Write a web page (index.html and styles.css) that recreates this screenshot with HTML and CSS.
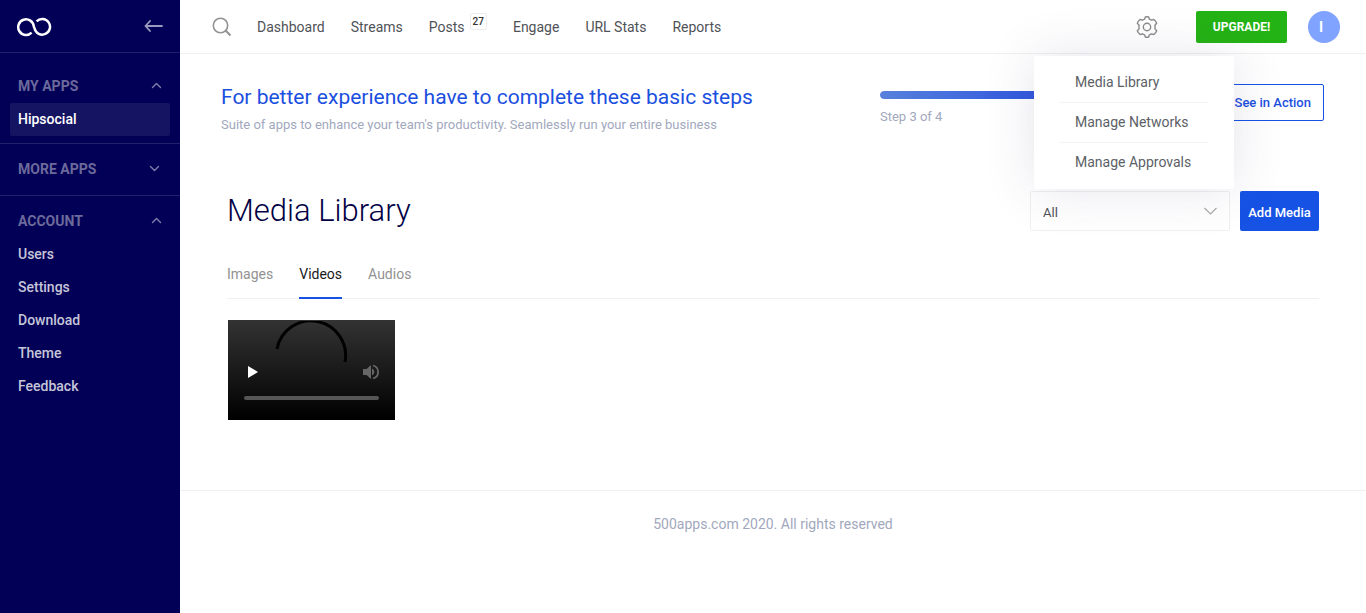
FILE: index.html
```html
<!DOCTYPE html>
<html lang="en">
<head>
<meta charset="utf-8">
<title>Hipsocial - Media Library</title>
<link rel="stylesheet" href="styles.css">
</head>
<body>
<div class="shell">
  <aside class="sidebar">
    <div class="brand">
      <a href="#" class="logo" aria-label="500apps home">
        <svg width="36" height="20" viewBox="0 0 36 20" fill="none" stroke="#fff" stroke-width="2.5">
          <path d="M15.600 15.600A7.800 7.800 0 1 1 17.800 9.500L18.600 11.500A7.800 7.800 0 1 0 20.600 4.400"/>
        </svg>
      </a>
      <button class="icon-button" aria-label="Collapse sidebar">
        <svg width="20" height="14" viewBox="0 0 20 14" fill="none" stroke="#9a9abf" stroke-width="1.8" stroke-linecap="round" stroke-linejoin="round"><path d="M19 6H2.500M7 1L2.500 6L7 11"/></svg>
      </button>
    </div>
    <section class="group group-first">
      <button class="group-head">MY APPS
        <svg class="chevron" width="11" height="7" viewBox="0 0 11 7"><path d="M1.500 5.500L5.500 1.500L9.500 5.500"/></svg>
      </button>
      <a href="#" class="side-link active">Hipsocial</a>
    </section>
    <section class="group group-closed">
      <button class="group-head">MORE APPS
        <svg class="chevron down" width="11" height="7" viewBox="0 0 11 7"><path d="M1.500 1.500L5.500 5.500L9.500 1.500"/></svg>
      </button>
    </section>
    <section class="group">
      <button class="group-head">ACCOUNT
        <svg class="chevron" width="11" height="7" viewBox="0 0 11 7"><path d="M1.500 5.500L5.500 1.500L9.500 5.500"/></svg>
      </button>
      <a href="#" class="side-link">Users</a>
      <a href="#" class="side-link">Settings</a>
      <a href="#" class="side-link">Download</a>
      <a href="#" class="side-link">Theme</a>
      <a href="#" class="side-link">Feedback</a>
    </section>
  </aside>

  <div class="page">
    <header class="topbar">
      <button class="icon-button search" aria-label="Search">
        <svg width="20" height="20" viewBox="0 0 20 20" fill="none" stroke="#929292" stroke-width="1.6"><circle cx="8.500" cy="8.500" r="7.200"/><path d="M13.300 13.300L18.500 18.500" stroke-width="2"/></svg>
      </button>
      <nav class="nav">
        <a href="#">Dashboard</a>
        <a href="#">Streams</a>
        <a href="#" class="with-badge">Posts<span class="badge">27</span></a>
        <a href="#">Engage</a>
        <a href="#">URL Stats</a>
        <a href="#">Reports</a>
      </nav>
      <div class="settings">
        <button class="icon-button" aria-label="Settings">
          <svg width="22" height="22" viewBox="0 0 22 22" fill="none" stroke="#8c8c8c" stroke-width="1.4" stroke-linejoin="round">
            <path d="M9.300 1Q11 .5 12.700 1L13.400 3.200Q14.600 3.600 15.500 4.200L17.900 3.500Q19.800 5 20.700 7.300L18.900 9.200Q19.200 11 18.900 12.800L20.700 14.700Q19.800 17 17.900 18.500L15.500 17.800Q14.600 18.400 13.400 18.800L12.700 21Q11 21.500 9.300 21L8.600 18.800Q7.400 18.400 6.500 17.800L4.100 18.500Q2.200 17 1.300 14.700L3.100 12.800Q2.800 11 3.100 9.200L1.300 7.300Q2.200 5 4.100 3.500L6.500 4.200Q7.400 3.600 8.600 3.200Z"/>
            <circle cx="11" cy="11" r="3.700"/>
          </svg>
        </button>
        <div class="menu">
          <a href="#">Media Library</a>
          <a href="#">Manage Networks</a>
          <a href="#">Manage Approvals</a>
        </div>
      </div>
      <button class="upgrade">UPGRADE!</button>
      <button class="avatar" aria-label="Account"><span>I</span></button>
    </header>

    <main>
      <section class="banner">
        <div class="intro">
          <h2>For better experience have to complete these basic steps</h2>
          <p>Suite of apps to enhance your team's productivity. Seamlessly run your entire business</p>
        </div>
        <div class="steps">
          <div class="track"><div class="fill" style="width: 75%"></div></div>
          <p>Step 3 of 4</p>
        </div>
        <button class="outline">See in Action</button>
      </section>

      <section class="library">
        <div class="library-head">
          <h1>Media Library</h1>
          <div class="select-wrap">
            <select aria-label="Media filter"><option>All</option></select>
            <svg width="13" height="8" viewBox="0 0 13 8" fill="none" stroke="#aaa" stroke-width="1.2"><path d="M.5 1L6.500 7L12.500 1"/></svg>
          </div>
          <button class="primary">Add Media</button>
        </div>
        <nav class="tabs">
          <a href="#">Images</a>
          <a href="#" class="current">Videos</a>
          <a href="#">Audios</a>
        </nav>
        <div class="player">
          <svg class="spinner" width="74" height="43" viewBox="0 0 74 43" fill="none" stroke="#000" stroke-width="3"><path d="M2 28A34.500 34.500 0 0 1 70 41"/></svg>
          <div class="controls">
            <button class="icon-button" aria-label="Play"><svg width="10" height="12" viewBox="0 0 10 12"><path d="M0 0L10 6L0 12Z" fill="#fff"/></svg></button>
            <button class="icon-button" aria-label="Volume"><svg width="16" height="16" viewBox="0 0 16 16"><path d="M0 5H3.500L8 1V15L3.500 11H0Z" fill="#666"/><path d="M9 4.500A3.800 3.800 0 0 1 9 11.500Z" fill="#666"/><path d="M10 1.500A6.700 6.700 0 0 1 10 14.500" fill="none" stroke="#666" stroke-width="1.800"/></svg></button>
          </div>
          <input type="range" value="0" aria-label="Playback position">
        </div>
      </section>
    </main>
    <footer>500apps.com 2020. All rights reserved</footer>
  </div>
</div>
</body>
</html>
```
FILE: styles.css
```css
* { box-sizing: border-box; }
body { margin: 0; font-family: Roboto, sans-serif; font-size: 14px; color: #4f5257; background: #fff; }
a { color: inherit; text-decoration: none; }
button, select, input { font: inherit; margin: 0; }
button { cursor: pointer; }
h1, h2, p { margin: 0; }
svg { display: block; }
.icon-button { padding: 0; border: 0; background: none; }

.shell { display: flex; min-height: 100vh; }

.sidebar { flex: none; width: 180px; background: #020056; font-weight: 500; }
.brand { display: flex; justify-content: space-between; align-items: center; height: 53px; padding: 2px 17px 0 16px; border-bottom: 1px solid #22206b; }
.group { padding: 8px 10px; border-bottom: 1px solid #22206b; }
.group-first { padding: 16px 10px 7px; }
.group-closed { padding-bottom: 9px; }
.group:last-child { border-bottom: 0; }
.group-head { display: flex; justify-content: space-between; align-items: center; width: 100%; height: 34px; padding: 0 8px 1px; border: 0; background: none; color: #6b6a9b; font-weight: 700; }
.chevron { fill: none; stroke: #7f7eaa; stroke-width: 1.4; stroke-linecap: round; stroke-linejoin: round; }
.chevron.down { margin-right: 2px; }
.side-link { display: flex; align-items: center; height: 33px; padding: 0 8px 2px; border-radius: 2px; color: #c6c6d9; }
.side-link.active { background: #151462; color: #fff; }

.page { flex: 1; min-width: 0; }
.topbar { display: flex; align-items: center; height: 54px; padding: 0 26px 0 32px; border-bottom: 1px solid #f0f0f0; }
.nav { display: flex; gap: 26px; margin-left: 25px; padding-top: 1px; }
.with-badge { display: flex; gap: 5px; }
.badge { align-self: flex-start; height: 17px; margin: -6px 0 -11px; padding: 0 2px; border: 1px solid #ececec; border-radius: 2px; font-size: 10px; line-height: 15px; font-weight: 500; color: #333; }
.settings { position: relative; display: flex; margin-left: auto; }
.menu { position: absolute; z-index: 5; top: 40px; right: -76px; width: 200px; padding: 6px 25px 7px; border-radius: 2px; background: #fff; box-shadow: 0 0 50px rgba(82, 63, 105, 0.15); color: #5c5f66; }
.menu a { display: flex; align-items: center; height: 40px; padding: 0 16px; white-space: nowrap; }
.menu a + a { border-top: 1px solid #f4f4f6; }
.upgrade { width: 91px; height: 32px; margin: 0 21px 0 38px; padding: 0; border: 0; border-radius: 2px; background: #24b314; color: #fff; font-size: 12px; font-weight: 700; }
.avatar { width: 32px; height: 32px; padding: 0 6px 0 0; border: 0; border-radius: 50%; background: #80a3ff; color: #fff; font-weight: 700; }

.banner { display: flex; align-items: flex-start; padding: 30px 42px 0 41px; }
.intro { flex: 0 1 527px; min-width: 0; white-space: nowrap; }
.banner h2 { font-size: 21px; line-height: 26px; font-weight: 400; color: #1b4fe0; }
.banner p { font-size: 13px; line-height: 18px; color: #a1a8bd; }
.banner h2 + p { margin-top: 6px; }
.steps { flex: 1; margin: 7px 24px 0 132px; }
.steps p { margin-top: 9px; }
.track { height: 8px; border-radius: 4px; background: #ebedf2; overflow: hidden; }
.fill { height: 100%; border-radius: 4px; background: linear-gradient(90deg, #5781dc, #1d41df); }
.outline { height: 37px; padding: 0 12px; border: 1px solid #1653e5; border-radius: 2px; background: #fff; color: #1b4fe0; font-size: 13px; font-weight: 500; }

.library { padding: 57px 47px 70px; }
.library-head { display: flex; align-items: center; }
.library-head h1 { margin-right: auto; font-size: 31px; line-height: 40px; font-weight: 300; color: #020045; }
.select-wrap { display: grid; align-items: center; width: 200px; margin-right: 10px; }
.select-wrap > * { grid-area: 1 / 1; }
.select-wrap select { appearance: none; height: 40px; padding: 2px 12px 0; border: 1px solid #f0f0f0; border-radius: 2px; background: #fff; color: #4f5257; font-size: 13px; }
.select-wrap svg { justify-self: end; margin-right: 13px; pointer-events: none; }
.primary { width: 79px; height: 40px; padding: 2px 0 0; border: 0; border-radius: 2px; background: #1653e5; color: #fff; font-size: 13px; font-weight: 500; }
.tabs { display: flex; gap: 26px; height: 68px; border-bottom: 1px solid #f0f0f0; color: #929292; }
.tabs a { height: 68px; padding-top: 35px; }
.tabs .current { border-bottom: 2px solid #1653e5; color: #1a1a1a; }
.player { display: flex; flex-direction: column; width: 167px; height: 100px; margin: 21px 1px 0; padding: 1px 16px 0; background: linear-gradient(#333, #000); }
.spinner { margin-left: 31px; }
.controls { display: flex; justify-content: space-between; align-items: center; padding: 0 0 0 4px; }
.player input { appearance: none; width: 100%; height: 4px; margin-top: 16px; border-radius: 2px; background: #555; }
.player input::-webkit-slider-thumb { appearance: none; width: 0; height: 0; }

footer { padding: 24px; border-top: 1px solid #f0f0f0; color: #a1a8bd; line-height: 18px; text-align: center; }
```
